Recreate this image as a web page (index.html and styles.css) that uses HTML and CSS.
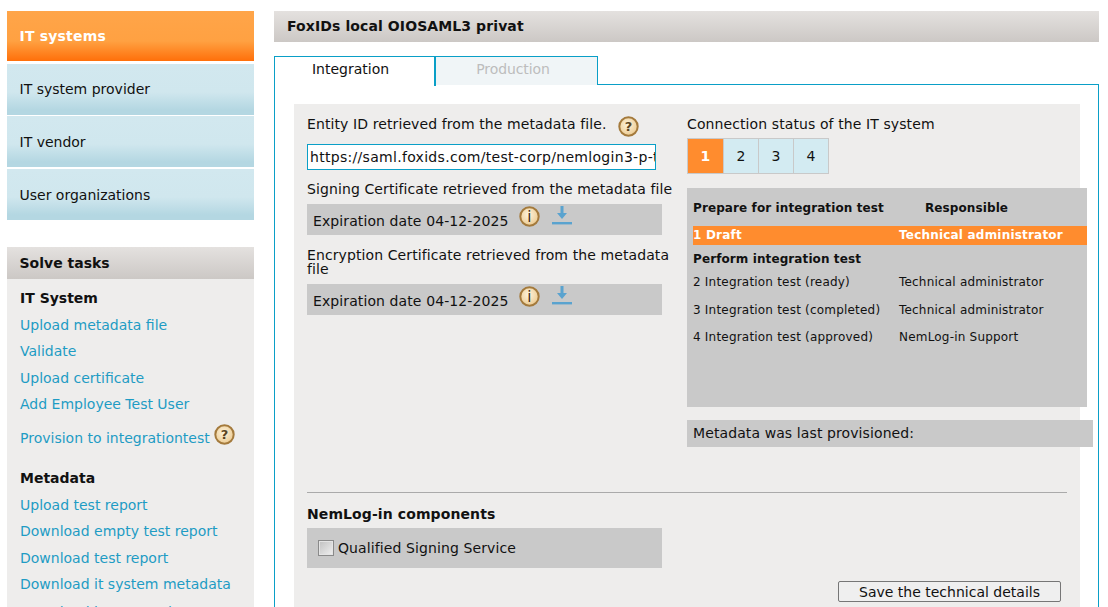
FILE: index.html
```html
<!DOCTYPE html>
<html lang="en">
<head>
    <meta charset="UTF-8">
    <title>FoxIDs local OIOSAML3 privat</title>
    <link rel="stylesheet" href="styles.css">
</head>
<body>
<svg class="defs" width="0" height="0">
    <defs>
        <radialGradient id="badge" cx="45%" cy="40%" r="60%">
            <stop offset="0%" stop-color="#fdf3dc"/>
            <stop offset="100%" stop-color="#eccb92"/>
        </radialGradient>
    </defs>
</svg>
<div class="page">
    <div class="sidebar">
        <div class="menu">
            <a class="menu-item menu-active">IT systems</a>
            <a class="menu-item">IT system provider</a>
            <a class="menu-item">IT vendor</a>
            <a class="menu-item">User organizations</a>
        </div>
        <div class="tasks">
            <div class="tasks-head">Solve tasks</div>
            <div class="tasks-body">
                <h4>IT System</h4>
                <a>Upload metadata file</a>
                <a>Validate</a>
                <a>Upload certificate</a>
                <a>Add Employee Test User</a>
                <a class="task-help">Provision to integrationtest
                    <svg class="icon" viewBox="0 0 21 21"><circle cx="10.5" cy="10.5" r="9.2" fill="url(#badge)" stroke="#a47a3c" stroke-width="2"/><text x="10.5" y="15" text-anchor="middle" class="icon-text">?</text></svg>
                </a>
                <h4 class="tasks-second">Metadata</h4>
                <a>Upload test report</a>
                <a>Download empty test report</a>
                <a>Download test report</a>
                <a>Download it system metadata</a>
                <a class="task-last">Download it system data</a>
            </div>
        </div>
    </div>

    <div class="main">
        <div class="main-head">FoxIDs local OIOSAML3 privat</div>
        <div class="tabs">
            <div class="tab tab-active">Integration</div>
            <div class="tab tab-off">Production</div>
        </div>
        <div class="panel">
            <div class="details">
                <div class="columns">
                    <div class="col-left">
                        <div class="label-row">Entity ID retrieved from the metadata file.
                            <svg class="icon" viewBox="0 0 21 21"><circle cx="10.5" cy="10.5" r="9.2" fill="url(#badge)" stroke="#a47a3c" stroke-width="2"/><text x="10.5" y="15" text-anchor="middle" class="icon-text">?</text></svg>
                        </div>
                        <input class="entity" type="text" value="https://saml.foxids.com/test-corp/nemlogin3-p-test/saml2">
                        <div class="cert-label">Signing Certificate retrieved from the metadata file</div>
                        <div class="cert-box">
                            <span>Expiration date 04-12-2025</span>
                            <svg class="icon" viewBox="0 0 21 21"><circle cx="10.5" cy="10.5" r="9.2" fill="url(#badge)" stroke="#a47a3c" stroke-width="2"/><text x="10.5" y="15.5" text-anchor="middle" class="icon-info">i</text></svg>
                            <svg class="icon-down" viewBox="0 0 20 20"><path d="M8.5 0h3v7h3.5l-5 6-5-6h3.5z" fill="#5aa3cf"/><path d="M0 17.2h20" stroke="#5aa3cf" stroke-width="2.4"/></svg>
                        </div>
                        <div class="cert-label cert-second">Encryption Certificate retrieved from the metadata file</div>
                        <div class="cert-box">
                            <span>Expiration date 04-12-2025</span>
                            <svg class="icon" viewBox="0 0 21 21"><circle cx="10.5" cy="10.5" r="9.2" fill="url(#badge)" stroke="#a47a3c" stroke-width="2"/><text x="10.5" y="15.5" text-anchor="middle" class="icon-info">i</text></svg>
                            <svg class="icon-down" viewBox="0 0 20 20"><path d="M8.5 0h3v7h3.5l-5 6-5-6h3.5z" fill="#5aa3cf"/><path d="M0 17.2h20" stroke="#5aa3cf" stroke-width="2.4"/></svg>
                        </div>
                    </div>
                    <div class="col-right">
                        <div class="label-row">Connection status of the IT system</div>
                        <div class="steps">
                            <div class="step step-active">1</div>
                            <div class="step">2</div>
                            <div class="step">3</div>
                            <div class="step">4</div>
                        </div>
                        <div class="status">
                            <div class="status-head"><b>Prepare for integration test</b><b>Responsible</b></div>
                            <div class="status-row status-current"><span>1 Draft</span><span>Technical administrator</span></div>
                            <div class="status-group">Perform integration test</div>
                            <div class="status-row"><span>2 Integration test (ready)</span><span>Technical administrator</span></div>
                            <div class="status-row"><span>3 Integration test (completed)</span><span>Technical administrator</span></div>
                            <div class="status-row"><span>4 Integration test (approved)</span><span>NemLog-in Support</span></div>
                        </div>
                        <div class="provisioned">Metadata was last provisioned:</div>
                    </div>
                </div>
                <hr>
                <h4 class="comp-title">NemLog-in components</h4>
                <label class="comp-box"><span class="check"></span>Qualified Signing Service</label>
                <div class="actions"><button>Save the technical details</button></div>
            </div>
        </div>
    </div>
</div>
</body>
</html>
```

FILE: styles.css
```css
* {
    margin: 0;
    padding: 0;
    box-sizing: border-box;
}

html, body {
    height: 607px;
    overflow: hidden;
    background-color: #ffffff;
}

body {
    font-family: "DejaVu Sans", Verdana, sans-serif;
    font-size: 14px;
    letter-spacing: 0.1px;
    color: #111111;
}

.defs {
    display: block;
    height: 0;
}

.page {
    display: flex;
    gap: 20px;
    padding: 11px 9px 0 7px;
}

/*left menu*/
.sidebar {
    width: 247px;
    flex-shrink: 0;
    letter-spacing: 0;
}

.menu {
    display: flex;
    flex-direction: column;
    gap: 1.4px;
}

.menu-item {
    display: flex;
    align-items: center;
    height: 51px;
    padding-left: 12.5px;
    background: linear-gradient(#d2e8ef 0%, #d0e7ee 55%, #b4d7e2 90%);
}

.menu-item:last-child {
    padding-top: 1px;
}

.menu-active {
    height: 50px;
    margin-bottom: 1.6px;
    font-weight: bold;
    letter-spacing: 0.2px;
    color: #ffffff;
    background: linear-gradient(#ffa549 0%, #ffa142 60%, #ff6f0a 100%);
}

.tasks {
    margin-top: 27px;
}

.tasks-head {
    height: 32px;
    line-height: 32px;
    padding-left: 12.5px;
    font-weight: bold;
    background: linear-gradient(#e4e1df, #ccc8c5);
}

.tasks-body {
    height: 340px;
    padding: 6.6px 0 0 13px;
    background-color: #eeedec;
}

.tasks-body h4 {
    font-size: 14px;
    line-height: 26.4px;
}

.tasks-body a {
    display: block;
    line-height: 26.4px;
    color: #1e9cc4;
}

.tasks-body .task-help {
    display: flex;
    align-items: center;
    gap: 4px;
    height: 42px;
}

.tasks-body .task-help .icon {
    margin-top: -8px;
}

.tasks-body .tasks-second {
    margin-top: 6px;
}

.tasks-body .task-last {
    margin-top: 2px;
}

.icon {
    width: 21px;
    height: 21px;
    flex-shrink: 0;
}

.icon-text {
    font: bold 13px "DejaVu Sans", sans-serif;
    fill: #5b4420;
}

.icon-info {
    font: 15px "DejaVu Sans", sans-serif;
    fill: #3a2c16;
}

.icon-down {
    width: 20px;
    height: 20px;
    flex-shrink: 0;
}

/*main content*/
.main {
    width: 825px;
}

.main-head {
    height: 31px;
    line-height: 31px;
    padding-left: 13px;
    font-weight: bold;
    background: linear-gradient(#e4e1df, #ccc8c5);
}

.tabs {
    display: flex;
    height: 28px;
    margin-top: 14px;
    position: relative;
    z-index: 1;
}

.tab {
    width: 162px;
    line-height: 24px;
    text-align: center;
    letter-spacing: 0;
    border: 1px solid #0a9fc7;
    border-bottom: none;
}

.tab-active {
    height: 30px;
    background-color: #ffffff;
    border-right-width: 2px;
    padding-right: 8px;
}

.tab-off {
    height: 29px;
    letter-spacing: -0.1px;
    color: #bdbdbd;
    background-color: #f0f5f7;
    border-left: none;
    padding-right: 7px;
}

.panel {
    height: 524px;
    padding: 19px 18px 0 19px;
    border: 1px solid #0a9fc7;
}

.details {
    height: 505px;
    padding: 10px 13px 0;
    background-color: #eeedec;
}

.columns {
    display: flex;
    height: 378px;
}

.col-left {
    width: 380px;
}

.col-right {
    width: 380px;
}

.label-row {
    display: flex;
    align-items: center;
    gap: 11px;
    height: 20px;
}

.col-left .label-row .icon {
    margin-top: 5px;
}

.entity {
    display: block;
    width: 349px;
    height: 26px;
    margin-top: 10px;
    padding-left: 2px;
    font-family: inherit;
    font-size: 14px;
    letter-spacing: 0.3px;
    color: #111111;
    border: 1px solid #0a9fc7;
}

.cert-label {
    width: 372px;
    margin-top: 12px;
    line-height: 14px;
}

.cert-second {
    margin-top: 13px;
}

.cert-box {
    display: flex;
    align-items: center;
    width: 355px;
    height: 31px;
    margin-top: 8px;
    padding-left: 6px;
    background-color: #c9c9c9;
}

.cert-box span {
    margin-top: 2px;
}

.cert-box .icon {
    margin: -7px 0 0 10px;
}

.cert-box .icon-down {
    margin: -7px 0 0 12px;
}

.steps {
    display: flex;
    margin-top: 4px;
}

.step {
    width: 36px;
    height: 36px;
    line-height: 34px;
    text-align: center;
    background-color: #d3ebf2;
    border: 1px solid #c9c9c9;
    margin-left: -1px;
}

.step:first-child {
    width: 37px;
    margin-left: 0;
}

.step-active {
    font-weight: bold;
    color: #ffffff;
    background-color: #ff8c2e;
}

.status {
    width: 400px;
    height: 219px;
    margin-top: 14px;
    padding: 10px 0 0 6px;
    font-size: 12px;
    letter-spacing: 0.2px;
    background-color: #c9c9c9;
}

.status-head {
    display: flex;
    height: 28px;
    line-height: 20px;
    letter-spacing: 0.1px;
}

.status-head b:first-child {
    width: 232px;
}

.status-row {
    display: grid;
    grid-template-columns: 206px 1fr;
    height: 27.5px;
    line-height: 27.5px;
}

.status-current {
    height: 19px;
    line-height: 19px;
    font-weight: bold;
    letter-spacing: 0.2px;
    color: #ffffff;
    background-color: #ff8c2e;
}

.status-group {
    height: 24px;
    line-height: 28px;
    font-weight: bold;
    letter-spacing: 0.1px;
}

.provisioned {
    width: 406px;
    height: 27px;
    line-height: 27px;
    margin-top: 13px;
    padding-left: 6px;
    background-color: #c9c9c9;
}

hr {
    border: none;
    border-top: 1px solid #aaaaaa;
}

.comp-title {
    font-size: 14px;
    line-height: 16px;
    margin-top: 13px;
}

.comp-box {
    display: flex;
    align-items: center;
    gap: 4px;
    width: 355px;
    height: 40px;
    margin-top: 6px;
    padding-left: 11px;
    background-color: #c9c9c9;
}

.check {
    width: 16px;
    height: 16px;
    border: 1px solid #8a8a8a;
    box-shadow: inset 0 0 0 1px #e4e4e4;
    background: linear-gradient(135deg, #c0c0c0, #f0f0f0);
}

.actions {
    display: flex;
    justify-content: flex-end;
    margin-top: 13px;
    padding-right: 6px;
}

button {
    width: 223px;
    height: 21px;
    font-family: inherit;
    font-size: 14px;
    color: #111111;
    background-color: #efefef;
    border: 1px solid #767676;
    border-radius: 2px;
}
```
